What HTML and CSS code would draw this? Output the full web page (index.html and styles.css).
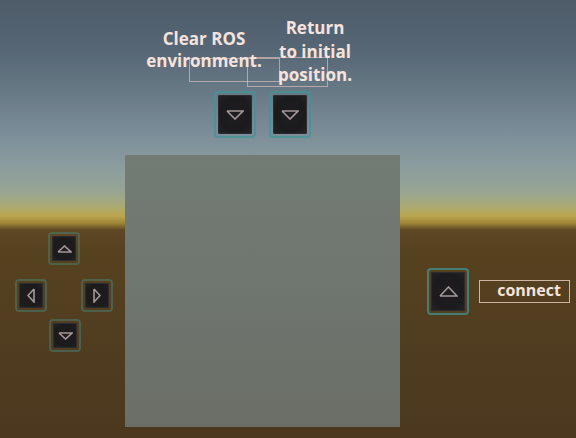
FILE: index.html
```html
<!DOCTYPE html>
<html>
<head>
<meta charset="utf-8">
<link rel="stylesheet" href="styles.css">
</head>
<body>
<div class="scene">
  <div class="cube"></div>

  <div class="frame frame-clear"></div>
  <div class="frame frame-return"></div>
  <div class="label label-clear">Clear ROS<br>environment.</div>
  <div class="label label-return">Return<br>to initial<br>position.</div>

  <div class="top-buttons">
    <div class="btn btn-lg"><div class="btn-face">
      <svg width="18" height="10" viewBox="0 0 18 10"><polyline points="1,1 9,9 17,1 1,1" class="tri"/></svg>
    </div></div>
    <div class="btn btn-lg"><div class="btn-face">
      <svg width="18" height="10" viewBox="0 0 18 10"><polyline points="1,1 9,9 17,1 1,1" class="tri"/></svg>
    </div></div>
  </div>

  <div class="dpad">
    <div class="btn btn-sm up"><div class="btn-face">
      <svg width="15" height="8" viewBox="0 0 15 8"><polyline points="1,7 7.5,1 14,7 1,7" class="tri"/></svg>
    </div></div>
    <div class="btn btn-sm left"><div class="btn-face">
      <svg width="8" height="15" viewBox="0 0 8 15"><polyline points="7,1 1,7.5 7,14 7,1" class="tri"/></svg>
    </div></div>
    <div class="btn btn-sm right"><div class="btn-face">
      <svg width="8" height="15" viewBox="0 0 8 15"><polyline points="1,1 7,7.5 1,14 1,1" class="tri"/></svg>
    </div></div>
    <div class="btn btn-sm down"><div class="btn-face">
      <svg width="15" height="8" viewBox="0 0 15 8"><polyline points="1,1 7.5,7 14,1 1,1" class="tri"/></svg>
    </div></div>
  </div>

  <div class="connect-row">
    <div class="btn btn-lg"><div class="btn-face">
      <svg width="19" height="11" viewBox="0 0 19 11"><polyline points="1,10 9.5,1 18,10 1,10" class="tri"/></svg>
    </div></div>
    <div class="connect-box">connect</div>
  </div>
</div>
</body>
</html>
```

FILE: styles.css
```css
html, body {
  margin: 0;
  padding: 0;
}
body {
  width: 576px;
  height: 438px;
  overflow: hidden;
  font-family: "Open Sans", "Noto Sans", sans-serif;
}
.scene {
  position: relative;
  width: 576px;
  height: 438px;
  overflow: hidden;
  background: linear-gradient(to bottom,
    #4e5c6a 0px,
    #566674 50px,
    #6a7b88 95px,
    #7c8e99 135px,
    #8a9c9e 165px,
    #95a494 190px,
    #a8aa78 205px,
    #bba650 216px,
    #a08638 223px,
    #5e4724 230px,
    #57421f 250px,
    #513d20 330px,
    #4b381e 438px);
}
.cube {
  position: absolute;
  left: 125px;
  top: 155px;
  width: 275px;
  height: 272px;
  background: linear-gradient(to bottom, #737b75 0%, #6f766f 50%, #6a6e66 100%);
}
.frame {
  position: absolute;
  border: 1.5px solid rgba(236, 200, 196, 0.6);
  box-sizing: border-box;
}
.frame-clear {
  left: 189px;
  top: 58px;
  width: 91px;
  height: 24px;
}
.frame-return {
  left: 247px;
  top: 57px;
  width: 81px;
  height: 30px;
}
.label {
  position: absolute;
  color: #f5e3dd;
  font-weight: 700;
  font-size: 17px;
  text-align: center;
  white-space: nowrap;
}
.label-clear {
  left: 134px;
  top: 28px;
  width: 140px;
  line-height: 22px;
}
.label-return {
  left: 255px;
  top: 16px;
  width: 120px;
  line-height: 23.5px;
}
.top-buttons {
  position: absolute;
  left: 214px;
  top: 91px;
  display: flex;
  gap: 13px;
}
.btn {
  box-sizing: border-box;
  border: 2px solid rgba(62, 150, 150, 0.72);
  border-radius: 4px;
  padding: 2px;
  display: flex;
}
.btn-lg {
  width: 42px;
  height: 47px;
}
.btn-sm {
  width: 32px;
  height: 33px;
  border-color: rgba(70, 130, 120, 0.5);
}
.btn-face {
  flex: 1;
  border-radius: 2px;
  background: radial-gradient(ellipse at center, #1f1d1f 0%, #1b1a1c 60%, #242326 100%);
  box-shadow: inset 0 0 0 1px #2c2b2e;
  display: flex;
  align-items: center;
  justify-content: center;
}
.tri {
  fill: none;
  stroke: #a49898;
  stroke-width: 1.6;
  stroke-linejoin: miter;
}
.dpad {
  position: absolute;
  left: 15px;
  top: 232px;
  display: grid;
  grid-template-columns: 33px 33px 33px;
  grid-template-rows: 47px 40px 33px;
  align-items: start;
}
.dpad .up { grid-column: 2; grid-row: 1; }
.dpad .left { grid-column: 1; grid-row: 2; }
.dpad .right { grid-column: 3; grid-row: 2; }
.dpad .down { grid-column: 2; grid-row: 3; margin-left: 1px; }
.connect-row {
  position: absolute;
  left: 427px;
  top: 268px;
  display: flex;
  align-items: flex-start;
  gap: 10px;
}
.connect-box {
  margin-top: 12px;
  box-sizing: border-box;
  width: 91px;
  height: 23px;
  border: 1.5px solid rgba(236, 210, 196, 0.8);
  color: #f5e3dd;
  font-weight: 700;
  font-size: 16px;
  line-height: 19px;
  text-align: right;
  padding-right: 8px;
}
```
